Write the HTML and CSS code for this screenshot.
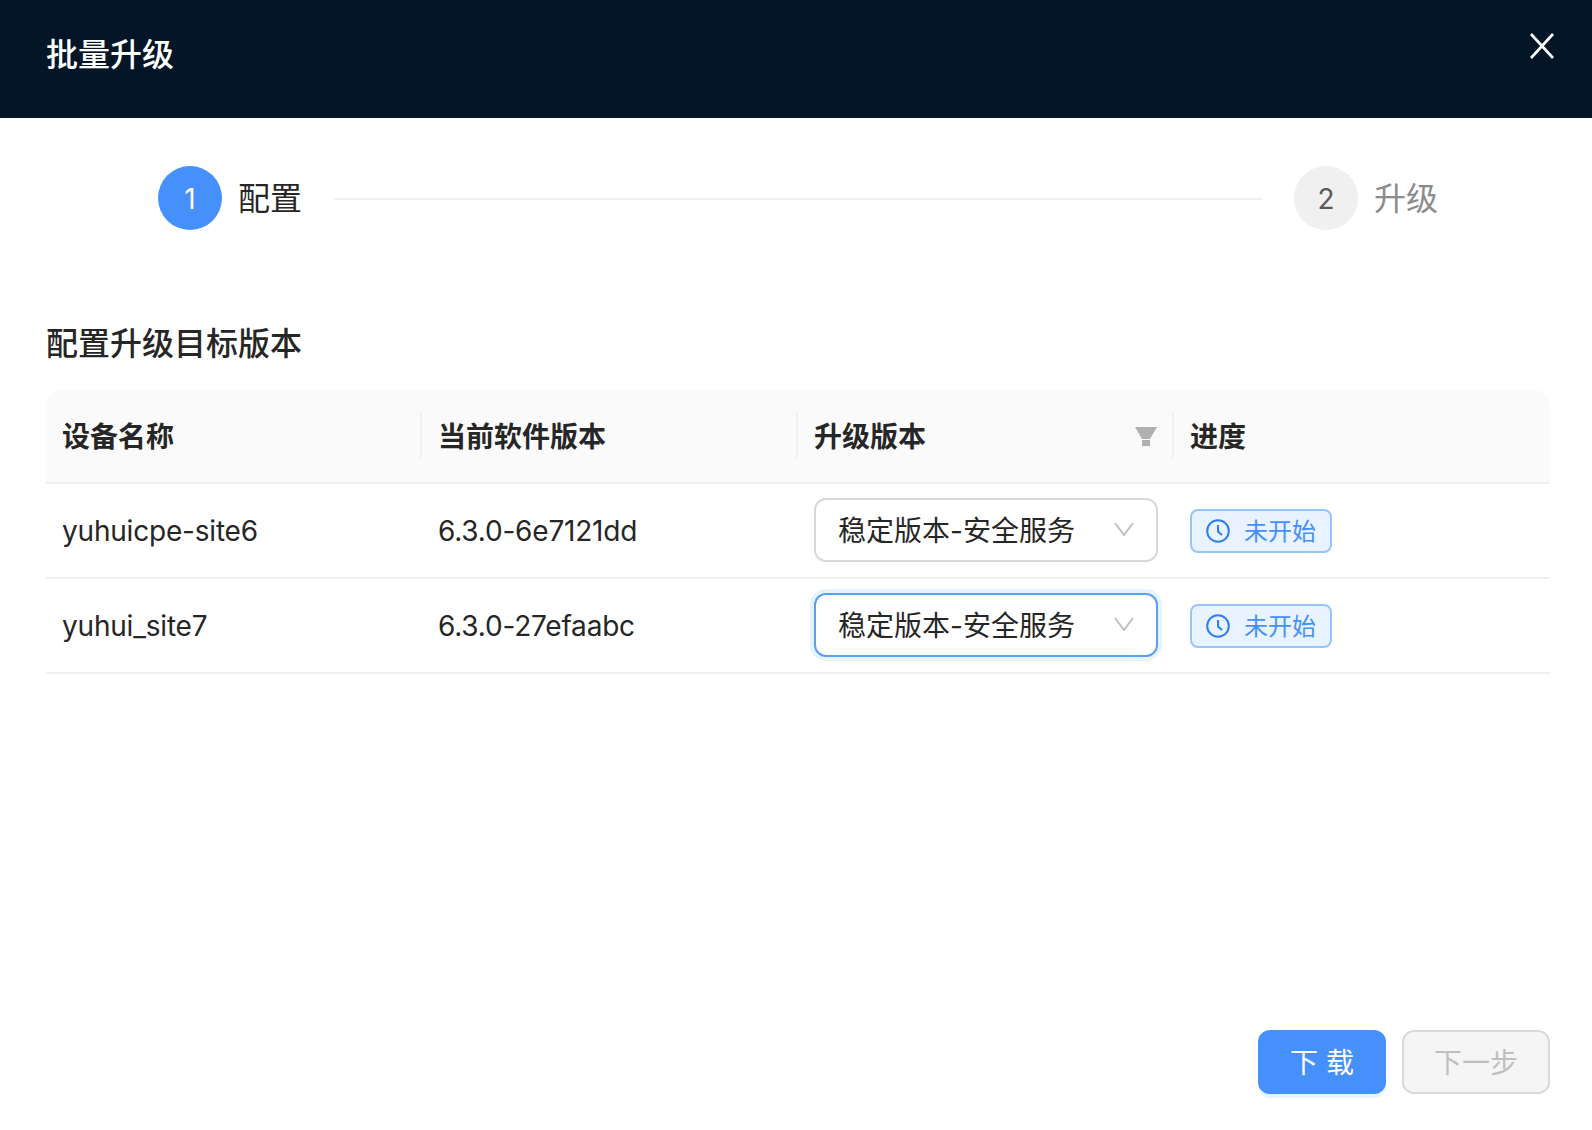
FILE: index.html
```html
<!DOCTYPE html>
<html lang="zh-CN">
<head>
  <meta charset="UTF-8" />
  <title>批量升级</title>
  <link rel="stylesheet" href="styles.css">
</head>
<body>
  <div class="modal">
    <div class="cabecera">
      <div class="titulo">批量升级</div>
      <svg class="cerrar" width="24" height="26" viewBox="0 0 24 26"><path d="M1 1 L23 25 M23 1 L1 25" fill="none" stroke="#fff" stroke-width="2.6"/></svg>
    </div>

    <div class="pasos">
      <div class="circulo activo">1</div>
      <div class="paso-nombre">配置</div>
      <div class="linea"></div>
      <div class="circulo">2</div>
      <div class="paso-nombre gris">升级</div>
    </div>

    <div class="seccion">配置升级目标版本</div>

    <div class="tabla">
      <div class="fila encabezado">
        <div class="celda">设备名称</div>
        <div class="celda">当前软件版本</div>
        <div class="celda con-filtro">升级版本
          <svg width="22" height="19" viewBox="0 0 22 19"><path d="M0 0 H22 L15 12 H7 Z M7 13 H15 V19 H7 Z" fill="#b0b0b0"/></svg>
        </div>
        <div class="celda">进度</div>
      </div>
      <div class="fila">
        <div class="celda latino">yuhuicpe-site6</div>
        <div class="celda latino">6.3.0-6e7121dd</div>
        <div class="celda">
          <div class="selector"><span>稳定版本-安全服务</span>
            <svg width="20" height="14" viewBox="0 0 20 14"><path d="M1 1 L10 13 L19 1" fill="none" stroke="#bfbfbf" stroke-width="2"/></svg>
          </div>
        </div>
        <div class="celda">
          <div class="etiqueta">
            <svg width="24" height="24" viewBox="0 0 24 24"><circle cx="12" cy="12" r="10.8" fill="none" stroke="#2f7bf0" stroke-width="2"/><path d="M12 6 V12.5 L16 16" fill="none" stroke="#2f7bf0" stroke-width="2"/></svg>
            <span>未开始</span>
          </div>
        </div>
      </div>
      <div class="fila">
        <div class="celda latino">yuhui_site7</div>
        <div class="celda latino">6.3.0-27efaabc</div>
        <div class="celda">
          <div class="selector enfocado"><span>稳定版本-安全服务</span>
            <svg width="20" height="14" viewBox="0 0 20 14"><path d="M1 1 L10 13 L19 1" fill="none" stroke="#bfbfbf" stroke-width="2"/></svg>
          </div>
        </div>
        <div class="celda">
          <div class="etiqueta">
            <svg width="24" height="24" viewBox="0 0 24 24"><circle cx="12" cy="12" r="10.8" fill="none" stroke="#2f7bf0" stroke-width="2"/><path d="M12 6 V12.5 L16 16" fill="none" stroke="#2f7bf0" stroke-width="2"/></svg>
            <span>未开始</span>
          </div>
        </div>
      </div>
    </div>

    <div class="pie">
      <button class="boton primario">下 载</button>
      <button class="boton apagado">下一步</button>
    </div>
  </div>
</body>
</html>
```
FILE: styles.css
```css
* {
  box-sizing: border-box;
}
body {
  margin: 0;
  background-color: #fff;
  font-family: "Inter", "Noto Sans CJK SC", sans-serif;
  color: #262626;
}
.modal {
  height: 1130px;
  display: flex;
  flex-direction: column;
}
.cabecera {
  height: 118px;
  padding: 33px 38px 0 46px;
  display: flex;
  justify-content: space-between;
  align-items: flex-start;
  background-color: #031628;
}
.titulo {
  font-size: 32px;
  font-weight: 500;
  line-height: 44px;
  color: #fff;
}
.pasos {
  display: flex;
  align-items: center;
  margin-top: 48px;
  padding: 0 154px 0 158px;
}
.circulo {
  width: 64px;
  height: 64px;
  padding-top: 2px;
  border-radius: 50%;
  display: flex;
  align-items: center;
  justify-content: center;
  font-size: 28px;
  background-color: #f0f0f0;
  color: #595959;
}
.circulo.activo {
  background-color: #4590fa;
  color: #fff;
}
.paso-nombre {
  margin-left: 16px;
  padding-top: 2px;
  font-size: 32px;
  line-height: 44px;
}
.paso-nombre.gris {
  color: #8c8c8c;
}
.linea {
  flex: 1;
  height: 2px;
  margin: 2px 32px 0;
  background-color: #f0f0f0;
}
.seccion {
  margin: 92px 46px 0;
  font-size: 32px;
  font-weight: 500;
  line-height: 44px;
}
.tabla {
  margin: 24px 42px 0 46px;
}
.fila {
  display: grid;
  grid-template-columns: repeat(4, 376px);
  height: 95px;
  border-bottom: 2px solid #f0f0f0;
  font-size: 28px;
}
.fila.encabezado {
  height: 94px;
  font-weight: 600;
  background-color: #fafafa;
  border-radius: 16px 16px 0 0;
}
.celda {
  display: flex;
  align-items: center;
  padding: 0 16px;
  position: relative;
}
.encabezado .celda {
  padding-bottom: 2px;
}
.latino {
  letter-spacing: -0.2px;
}
.encabezado .celda + .celda::before {
  content: "";
  position: absolute;
  left: -2px;
  top: 23px;
  width: 2px;
  height: 45px;
  background-color: #f0f0f0;
}
.con-filtro {
  justify-content: space-between;
  padding-right: 17px;
}
.con-filtro svg {
  margin-top: 2px;
}
.selector {
  width: 344px;
  height: 64px;
  margin-bottom: 2px;
  padding: 0 22px 1px;
  display: flex;
  align-items: center;
  justify-content: space-between;
  background-color: #fff;
  border: 2px solid #d9d9d9;
  border-radius: 12px;
}
.selector.enfocado {
  border-color: #5b9ff3;
  box-shadow: 0 0 0 4px #e6f4ff;
}
.etiqueta {
  width: 142px;
  height: 44px;
  padding-left: 14px;
  display: flex;
  align-items: center;
  gap: 14px;
  font-size: 24px;
  color: #4590fa;
  background-color: #e8f3ff;
  border: 2px solid #96c4fd;
  border-radius: 8px;
}
.etiqueta span {
  padding-bottom: 3px;
}
.pie {
  margin-top: auto;
  padding: 0 42px 36px 0;
  display: flex;
  justify-content: flex-end;
  gap: 16px;
}
.boton {
  height: 64px;
  padding-bottom: 4px;
  border-radius: 12px;
  font-family: inherit;
  font-size: 28px;
}
.primario {
  width: 128px;
  color: #fff;
  background-color: #4590fa;
  border: none;
  box-shadow: 0 4px 0 #e6f4ff;
}
.apagado {
  width: 148px;
  color: #bfbfbf;
  background-color: #f5f5f5;
  border: 2px solid #d9d9d9;
}
```
